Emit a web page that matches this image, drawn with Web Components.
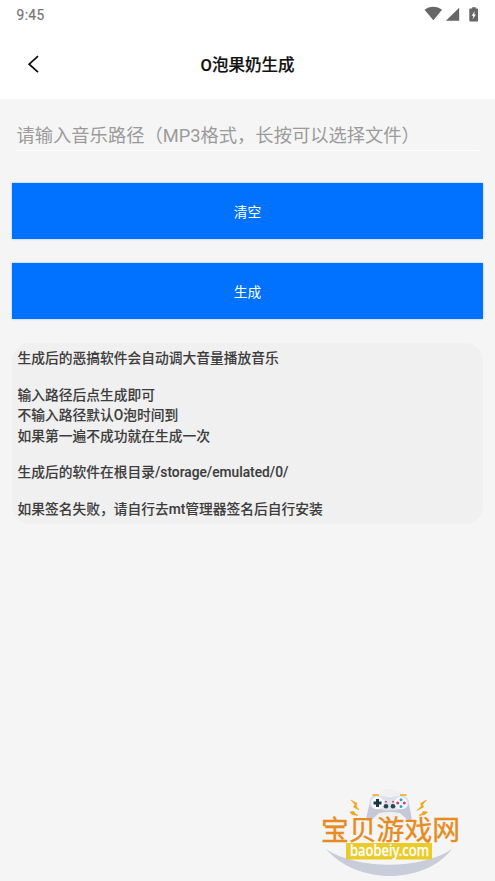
<!DOCTYPE html>
<html lang="zh-CN">
<head>
<meta charset="utf-8">
<title>O泡果奶生成</title>
<style>
html,body{margin:0;height:100%}
body{background:#f5f5f5;font-family:Roboto,"Noto Sans CJK SC",sans-serif;overflow:hidden}
</style>
</head>
<body>
<app-screen></app-screen>
<script>
function define(name, html) {
  const t = document.createElement('template');
  t.innerHTML = html;
  customElements.define(name, class extends HTMLElement {
    constructor() {
      super();
      this.attachShadow({mode: 'open'}).appendChild(t.content.cloneNode(true));
    }
  });
}

define('status-bar', `
<style>
:host{display:flex;height:29px;box-sizing:border-box;padding:0 16px 0 16.5px;align-items:center;justify-content:space-between;background:#fff;color:#757575;font-size:13.75px;font-weight:400;letter-spacing:.4px;-webkit-text-stroke:.2px #757575}
svg{display:block}
</style>
<span>9:45</span>
<svg width="56" height="18" viewBox="0 0 56 18" fill="#666">
<path d="M1.5 3.7C6.5-.2 14-.2 19 3.7L10.4 14.3Z"/>
<path d="M36.2 1.8V14.8H22.9Z"/>
<path d="M47.2 2.6h1.9V1.2h3.7v1.4H54.1q.9 0 .9.9V14.6q0 .9-.9.9H47.2q-.9 0-.9-.9V3.5q0-.9.9-.9Z"/>
<path d="M51.8 5 48.6 9.7h1.8L49.6 13.5 52.9 8.5h-1.8Z" fill="#fff"/>
</svg>`);

define('title-bar', `
<style>
:host{display:grid;grid-template-columns:60px 1fr 60px;align-items:center;height:70px;background:#fff;color:#111}
svg{display:block;margin-left:26px}
h1{margin:0;padding-top:3px;text-align:center;font-size:16.5px;line-height:24px;font-weight:500;-webkit-text-stroke:.2px #111}
</style>
<svg width="15" height="20" viewBox="0 0 15 20" fill="none" stroke="#111" stroke-width="1.8"><path d="M12 2.2 3.2 10.2 12 18.2"/></svg>
<h1><slot></slot></h1>`);

define('path-field', `
<style>
:host{display:block;margin:0 4px;height:52px;box-sizing:border-box;border-bottom:1px solid #fefefe;padding:23px 0 0 .5px;color:#9b9b9b;font-size:18.3px;line-height:28px;white-space:nowrap}
</style><slot></slot>`);

define('action-button', `
<style>
:host{display:block}
button{display:block;width:100%;height:56px;border:0;border-radius:0;padding:1px 0 0;background:#0072ff;color:#fff;font:inherit;font-size:13.75px;line-height:20px;box-shadow:0 .4px 2px #8ec3ff}
</style><button><slot></slot></button>`);

define('info-card', `
<style>
:host{display:block;height:181px;box-sizing:border-box;padding:5px 5.5px;border-radius:18px;background:#f0f0f0;color:#3d3d3d;font-size:13.75px;font-weight:500;line-height:20.3px;-webkit-text-stroke:.1px #3d3d3d}
::slotted(p){margin:0}
::slotted(p.gap){margin-top:16.3px!important}
</style><slot></slot>`);

define('site-mark', `
<style>
:host{display:block;position:absolute;left:315px;top:785px;width:150px;height:96px}
svg{display:block}
text.cn{font:400 27.8px "Noto Sans CJK SC",sans-serif}
text.en{font:500 15.5px "Noto Sans",sans-serif}
</style>
<svg width="150" height="96" viewBox="0 0 150 96">
<circle cx="75" cy="20" r="16" fill="#f0f0f0"/>
<path d="M11 64C42 85 106 85 137 64C109 100 42 100 11 64Z" fill="#c9ccd9"/>
<g fill="#f0a51e" stroke="#f0a51e" stroke-width=".7">
<path d="M36 15 42 18.5 41 21 44 24.8 38.5 22 40 19.5Z"/>
<path d="M35 27 39 26.6 40 28.5 43 30.5 37 29.5Z"/>
<path d="M111.5 15 105.5 18.5 106.5 21 102 25.5 108.5 22 107.5 19.5Z"/>
<path d="M112.5 27 108 26.6 107 28.5 104 30.5 110 29.5Z"/>
</g>
<path d="M57.5 10h6.5M85 10h6.5" stroke="#e8bd52" stroke-width="1.8"/>
<path d="M60 11Q55 11 54.5 19L51.5 32Q51 36 54 36L57 34.5 64 28Q75 26 85 28L92 34.5 94.5 36Q97 36 96.5 32L94 19Q93 11 88 11H81Q78 13 75 13T69 11Z" fill="#c5c8d6"/>
<path d="M61 11Q54 12 55 20Q57 25 64 24Q75 27 86 24Q92 25 93.5 19Q93 11 87 11H80Q78 13.5 75 13.5T70 11Z" fill="#e1e2eb"/>
<circle cx="62.5" cy="18" r="6.2" fill="#fafafc"/><circle cx="86" cy="18" r="6.2" fill="#fafafc"/>
<path d="M62.5 14v8M58.5 18h8" stroke="#173746" stroke-width="3"/>
<circle cx="71" cy="21.3" r="2.3" fill="#294555"/><circle cx="78" cy="21.3" r="2.3" fill="#294555"/>
<circle cx="71" cy="16.8" r="1" fill="#c56"/><circle cx="78" cy="16.8" r="1" fill="#c56"/>
<g><circle cx="86" cy="14.7" r="1.5" fill="#25a7d3"/><circle cx="86" cy="21.4" r="1.5" fill="#25a7d3"/><circle cx="82.7" cy="18" r="1.5" fill="#dd4054"/><circle cx="89.3" cy="18" r="1.5" fill="#dd4054"/></g>
<text class="cn" x="6" y="54.5" textLength="139" fill="#e78b20" stroke="#e78b20" stroke-width=".35">宝贝游戏网</text>
<rect x="31" y="58" width="86" height="16.5" fill="#eacb28"/>
<text class="en" x="35" y="70.7" textLength="79" lengthAdjust="spacingAndGlyphs" fill="#fff" stroke="#fff" stroke-width=".25">baobeiy.com</text>
</svg>`);

define('app-screen', `
<style>
:host{display:flex;flex-direction:column;height:881px;background:#f5f5f5}
main{display:flex;flex-direction:column;padding:0 12px}
.actions{display:flex;flex-direction:column;gap:24px;margin:32.4px 0 24px}
</style>
<status-bar></status-bar>
<title-bar>O泡果奶生成</title-bar>
<main>
<path-field>请输入音乐路径（MP3格式，长按可以选择文件）</path-field>
<div class="actions"><action-button>清空</action-button><action-button>生成</action-button></div>
<info-card>
<p>生成后的恶搞软件会自动调大音量播放音乐</p>
<p class="gap">输入路径后点生成即可</p>
<p>不输入路径默认O泡时间到</p>
<p>如果第一遍不成功就在生成一次</p>
<p class="gap">生成后的软件在根目录/storage/emulated/0/</p>
<p class="gap">如果签名失败，请自行去mt管理器签名后自行安装</p>
</info-card>
</main>
<site-mark></site-mark>`);
</script>
</body>
</html>
